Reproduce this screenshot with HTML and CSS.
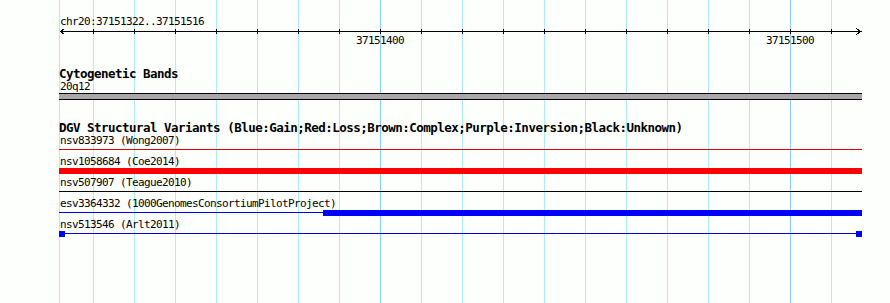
FILE: index.html
```html
<!DOCTYPE html>
<html>
<head>
<meta charset="utf-8">
<link rel="stylesheet" href="styles.css">
</head>
<body>
<div class="panel">
  <div class="grid"></div>
  <div class="content">
    <div class="label">chr20:37151322..37151516</div>
    <svg class="ruler" width="803" height="20" viewBox="0 0 803 20" shape-rendering="crispEdges">
      <line x1="1" y1="3.5" x2="803" y2="3.5" stroke="#000"/>
      <polyline points="5.5,0.5 1.5,3.5 5.5,6.5" fill="none" stroke="#000"/>
      <polyline points="797.5,0.5 801.5,3.5 797.5,6.5" fill="none" stroke="#000"/>
      <g stroke="#000">
        <line x1="34.5" y1="1" x2="34.5" y2="6"/>
        <line x1="75.5" y1="1" x2="75.5" y2="6"/>
        <line x1="116.5" y1="1" x2="116.5" y2="6"/>
        <line x1="157.5" y1="1" x2="157.5" y2="6"/>
        <line x1="198.5" y1="1" x2="198.5" y2="6"/>
        <line x1="239.5" y1="1" x2="239.5" y2="6"/>
        <line x1="280.5" y1="1" x2="280.5" y2="6"/>
        <line x1="321.5" y1="1" x2="321.5" y2="6"/>
        <line x1="362.5" y1="1" x2="362.5" y2="6"/>
        <line x1="403.5" y1="1" x2="403.5" y2="6"/>
        <line x1="444.5" y1="1" x2="444.5" y2="6"/>
        <line x1="485.5" y1="1" x2="485.5" y2="6"/>
        <line x1="526.5" y1="1" x2="526.5" y2="6"/>
        <line x1="567.5" y1="1" x2="567.5" y2="6"/>
        <line x1="608.5" y1="1" x2="608.5" y2="6"/>
        <line x1="649.5" y1="1" x2="649.5" y2="6"/>
        <line x1="690.5" y1="1" x2="690.5" y2="6"/>
        <line x1="731.5" y1="1" x2="731.5" y2="6"/>
        <line x1="772.5" y1="1" x2="772.5" y2="6"/>
      </g>
      <text class="tick-label" x="321" y="16" text-anchor="middle">37151400</text>
      <text class="tick-label" x="731" y="16" text-anchor="middle">37151500</text>
    </svg>

    <div class="track-title first">Cytogenetic Bands</div>
    <div class="label">20q12</div>
    <div class="band"></div>

    <div class="track-title second">DGV Structural Variants (Blue:Gain;Red:Loss;Brown:Complex;Purple:Inversion;Black:Unknown)</div>

    <div class="feature">
      <div class="label">nsv833973 (Wong2007)</div>
      <div class="glyph"><div class="thin red-thin"></div></div>
    </div>
    <div class="feature">
      <div class="label">nsv1058684 (Coe2014)</div>
      <div class="glyph"><div class="thick red-thick"></div></div>
    </div>
    <div class="feature">
      <div class="label">nsv507907 (Teague2010)</div>
      <div class="glyph"><div class="thin black-thin"></div></div>
    </div>
    <div class="feature">
      <div class="label">esv3364332 (1000GenomesConsortiumPilotProject)</div>
      <div class="glyph split">
        <div class="thin blue-thin seg-left"></div>
        <div class="thick blue-thick seg-right"></div>
      </div>
    </div>
    <div class="feature">
      <div class="label">nsv513546 (Arlt2011)</div>
      <div class="glyph split">
        <div class="square"></div>
        <div class="thin blue-thin grow"></div>
        <div class="square"></div>
      </div>
    </div>
  </div>
</div>
</body>
</html>
```
FILE: styles.css
```css
html, body {
  margin: 0;
  padding: 0;
  background: #fdfffd;
}

.panel {
  position: relative;
  width: 890px;
  height: 303px;
  overflow: hidden;
  background: #fdfffd;
  font-family: "DejaVu Sans Mono", "Liberation Mono", monospace;
  color: #000;
}

.grid {
  position: absolute;
  left: 59px;
  top: 0;
  width: 773px;
  height: 303px;
  background-image:
    linear-gradient(#87cefa, #87cefa),
    linear-gradient(#87cefa, #87cefa),
    linear-gradient(#afeeee, #afeeee),
    linear-gradient(to right, #afeeee 0, #afeeee 1px, transparent 1px, transparent 41px);
  background-size: 1px 100%, 1px 100%, 1px 100%, 41px 100%;
  background-position: 321px 0, 731px 0, 0 0, 34px 0;
  background-repeat: no-repeat, no-repeat, no-repeat, repeat-x;
}

.content {
  position: relative;
  padding-top: 15px;
  margin-left: 59px;
  width: 803px;
}

.label {
  font-size: 11px;
  letter-spacing: -0.62px;
  line-height: 13px;
  height: 13px;
  padding-left: 1px;
  white-space: nowrap;
}

.ruler {
  display: block;
}

.tick-label {
  font-family: "DejaVu Sans Mono", "Liberation Mono", monospace;
  font-size: 11px;
  letter-spacing: -0.62px;
  fill: #000;
}

.track-title {
  font-weight: bold;
  font-size: 12.5px;
  letter-spacing: -0.52px;
  line-height: 13px;
  height: 13px;
  white-space: nowrap;
}

.track-title.first {
  margin-top: 19px;
}

.track-title.second {
  margin-top: 21px;
}

.band {
  height: 5px;
  border-top: 1px solid #000;
  border-bottom: 1px solid #000;
  background: #a9a7a9;
}

.feature {
  display: flex;
  flex-direction: column;
}

.glyph {
  height: 6px;
  margin-bottom: 2px;
}

.glyph.split {
  display: flex;
}

.thin {
  height: 1px;
  margin-top: 2px;
}

.thick {
  height: 6px;
}

.red-thin { background: #dd0000; }
.red-thick { background: #ff0000; }
.black-thin { background: #000000; }
.blue-thin { background: #0000dd; }
.blue-thick { background: #0000ff; }

.seg-left {
  width: 264px;
}

.seg-right {
  flex: 1;
}

.grow {
  flex: 1;
}

.square {
  width: 6px;
  height: 6px;
  background: #0000ff;
}
```
